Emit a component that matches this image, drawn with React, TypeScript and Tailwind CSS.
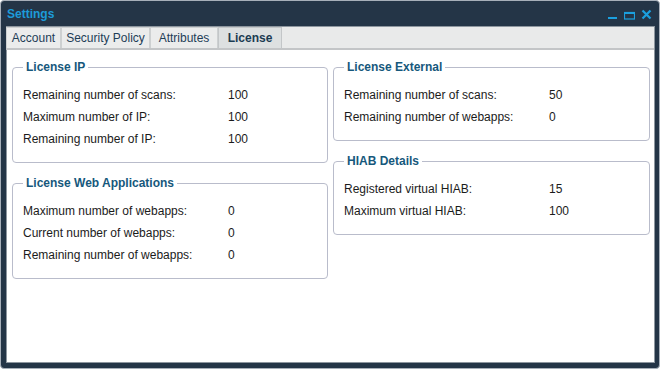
import React from 'react';

interface Row {
  label: string;
  value: string;
}

const tabs = ['Account', 'Security Policy', 'Attributes', 'License'];
const tabWidths: Record<string, string> = {
  Account: 'w-[55px]',
  'Security Policy': 'w-[89px]',
  Attributes: 'w-[68px]',
  License: 'w-[64px]',
};

function Group({ title, rows }: { title: string; rows: Row[] }) {
  return (
    <fieldset className="border border-[#b9bccb] rounded-[4px] pl-[10px] pr-2 pb-[12px] pt-[10px] min-w-0">
      <legend className="px-[3px] text-[12px] leading-[14px] font-bold text-[#16587c]">{title}</legend>
      {rows.map((r) => (
        <div key={r.label} className="flex h-[22px] items-center text-[12px] text-[#1b1b1b]">
          <span className="w-[205px] shrink-0">{r.label}</span>
          <span>{r.value}</span>
        </div>
      ))}
    </fieldset>
  );
}

export default function App() {
  return (
    <div className="w-[661px] h-[370px] bg-white font-['Liberation_Sans',Arial,sans-serif]">
      <div className="w-[660px] h-[369px] rounded-[4px] border border-[#a7afb9] bg-[#243547] pl-[5px] pr-[4px] pb-[5px] flex flex-col">
        {/* Title bar */}
        <div className="h-[25px] shrink-0 flex items-center justify-between pl-[1px] pr-[3px]">
          <span className="text-[12px] font-bold text-[#1d9bd9] mt-[1px]">Settings</span>
          <div className="flex items-end gap-[6px] mt-[2px]">
            <svg width="10" height="10" viewBox="0 0 10 10">
              <rect x="0" y="7" width="9" height="2" fill="#1ba0df" />
            </svg>
            <svg width="11" height="10" viewBox="0 0 11 10">
              <rect x="0.5" y="2.5" width="10" height="6.5" fill="none" stroke="#1ba0df" strokeWidth="1.2" />
              <rect x="0" y="2" width="11" height="2" fill="#1ba0df" />
            </svg>
            <svg width="11" height="11" viewBox="0 0 11 11">
              <path d="M1.5 1.5 L9.5 9.5 M9.5 1.5 L1.5 9.5" stroke="#1ba0df" strokeWidth="2.2" />
            </svg>
          </div>
        </div>

        {/* Body */}
        <div className="flex-1 border border-[#8d969f] bg-white flex flex-col">
          <div className="h-[23px] shrink-0 bg-[#e9eaea] border-b-2 border-[#c3c5c7] flex items-end pt-[2px] -ml-px">
            {tabs.map((t) => {
              const active = t === 'License';
              return (
                <div
                  key={t}
                  className={`${tabWidths[t]} h-[21px] flex items-center justify-center text-[12px] border border-b-0 ${
                    active
                      ? 'bg-[#dde0e1] border-[#c3c6c8] font-bold text-[#1b3b52]'
                      : 'bg-[#ebecec] border-[#cdd0d1] text-[#1e3d57]'
                  }`}
                >
                  {t}
                </div>
              );
            })}
          </div>

          <div className="grid grid-cols-[316px_317px] gap-x-[5px] pl-[5px] pt-[10px]">
            <div className="flex flex-col gap-[13px]">
              <Group
                title="License IP"
                rows={[
                  { label: 'Remaining number of scans:', value: '100' },
                  { label: 'Maximum number of IP:', value: '100' },
                  { label: 'Remaining number of IP:', value: '100' },
                ]}
              />
              <Group
                title="License Web Applications"
                rows={[
                  { label: 'Maximum number of webapps:', value: '0' },
                  { label: 'Current number of webapps:', value: '0' },
                  { label: 'Remaining number of webapps:', value: '0' },
                ]}
              />
            </div>
            <div className="flex flex-col gap-[13px]">
              <Group
                title="License External"
                rows={[
                  { label: 'Remaining number of scans:', value: '50' },
                  { label: 'Remaining number of webapps:', value: '0' },
                ]}
              />
              <Group
                title="HIAB Details"
                rows={[
                  { label: 'Registered virtual HIAB:', value: '15' },
                  { label: 'Maximum virtual HIAB:', value: '100' },
                ]}
              />
            </div>
          </div>
        </div>
      </div>
    </div>
  );
}
